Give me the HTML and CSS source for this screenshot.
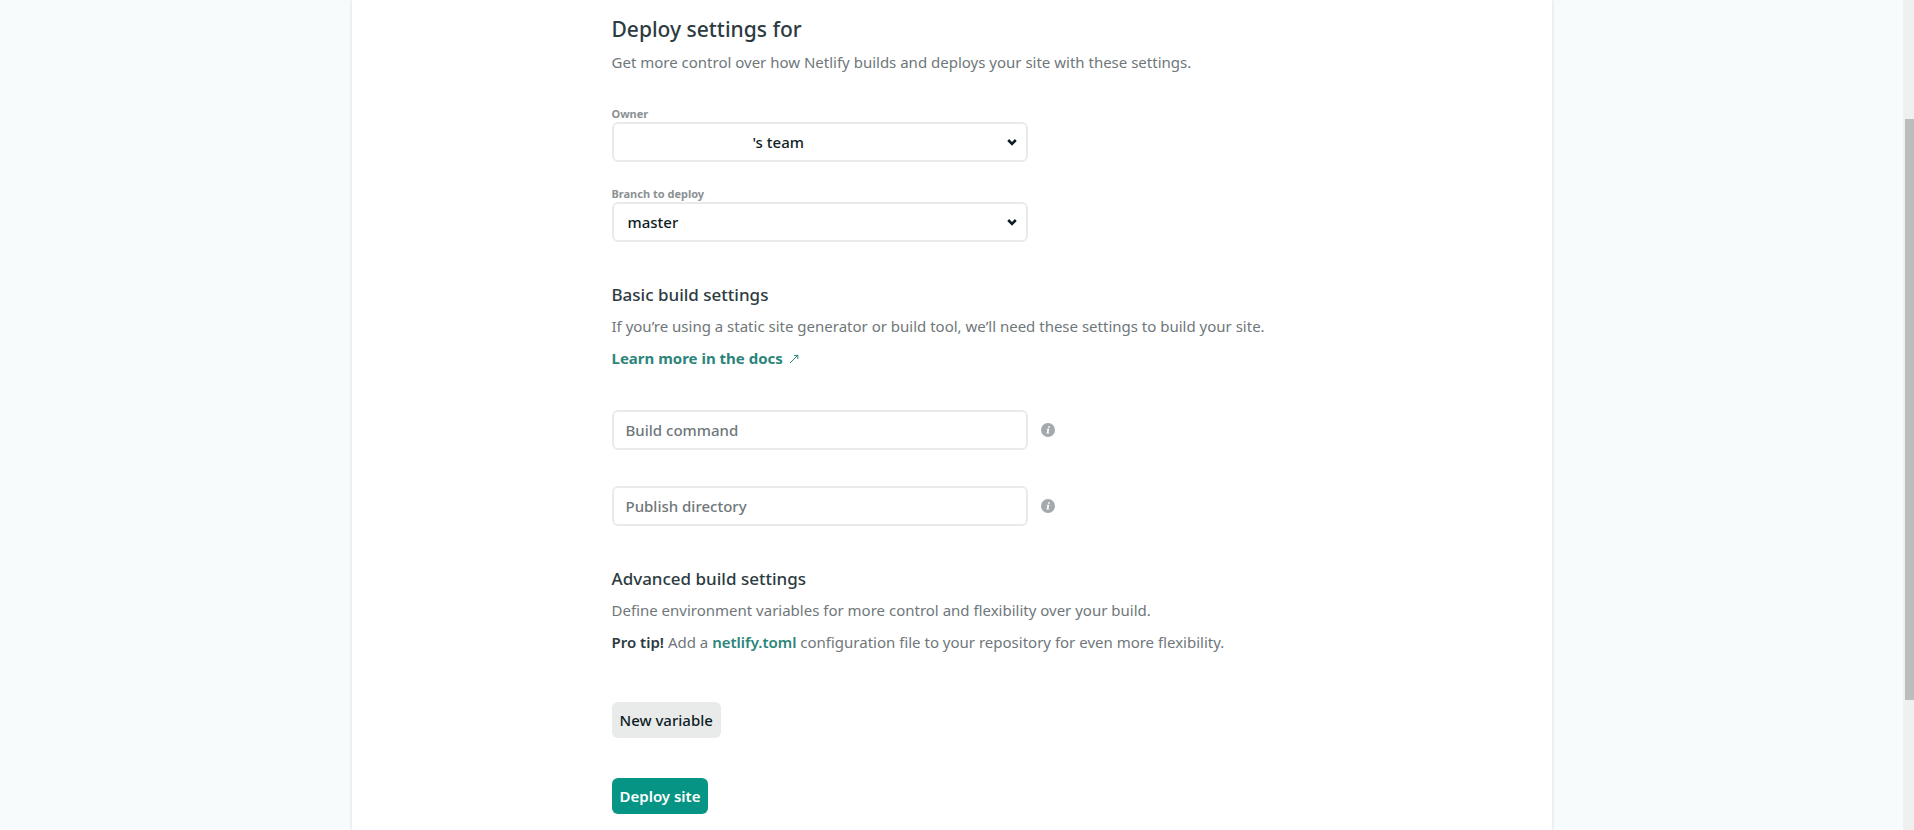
FILE: index.html
```html
<!DOCTYPE html>
<html lang="en">
<head>
    <meta charset="UTF-8">
    <meta name="viewport" content="width=device-width, initial-scale=1.0">
    <title>Deploy settings</title>
    <link rel="stylesheet" href="styles.css">
</head>
<body>
    <main class="card">
        <form class="settings">
            <section>
                <h1>Deploy settings for</h1>
                <p>Get more control over how Netlify builds and deploys your site with these settings.</p>

                <div class="field">
                    <label for="owner">Owner</label>
                    <select id="owner" class="control owner">
                        <option>'s team</option>
                    </select>
                </div>
                <div class="field">
                    <label for="branch">Branch to deploy</label>
                    <select id="branch" class="control">
                        <option>master</option>
                    </select>
                </div>
            </section>

            <section>
                <h2>Basic build settings</h2>
                <p>If you’re using a static site generator or build tool, we’ll need these settings to build your site.</p>
                <p>
                    <a href="#docs" class="docs">Learn more in the docs
                        <svg width="10" height="10" viewBox="0 0 10 10" fill="none" stroke="currentColor"><path d="M1 9L9 1M5 1.4H8.8V5"/></svg>
                    </a>
                </p>

                <div class="input-row">
                    <input type="text" class="control" placeholder="Build command" aria-label="Build command">
                    <button type="button" class="info" aria-label="About the build command">
                        <svg width="14" height="14" viewBox="0 0 14 14"><circle cx="7" cy="7" r="7" fill="#a3a9ac"/><path d="M7.3 3.2h1.6l-.4 1.6H6.9zM5.9 5.7h2.5l-1 3.9h.8l-.2 1H5.5l1-3.9h-.9z" fill="#fff"/></svg>
                    </button>
                </div>
                <div class="input-row">
                    <input type="text" class="control" placeholder="Publish directory" aria-label="Publish directory">
                    <button type="button" class="info" aria-label="About the publish directory">
                        <svg width="14" height="14" viewBox="0 0 14 14"><circle cx="7" cy="7" r="7" fill="#a3a9ac"/><path d="M7.3 3.2h1.6l-.4 1.6H6.9zM5.9 5.7h2.5l-1 3.9h.8l-.2 1H5.5l1-3.9h-.9z" fill="#fff"/></svg>
                    </button>
                </div>
            </section>

            <section>
                <h2>Advanced build settings</h2>
                <p>Define environment variables for more control and flexibility over your build.</p>
                <p><strong>Pro tip!</strong> Add a <a href="#toml">netlify.toml</a> configuration file to your repository for even more flexibility.</p>

                <div class="actions">
                    <button type="button" class="btn">New variable</button>
                    <button type="submit" class="btn btn-primary">Deploy site</button>
                </div>
            </section>
        </form>
    </main>

    <div class="scrollbar">
        <div class="thumb"></div>
    </div>
</body>
</html>
```
FILE: styles.css
```css
* {
    box-sizing: border-box;
}
body {
    margin: 0;
    padding-right: 11px;
    background-color: #f7fbfc;
    color: #2d3b41;
    font-family: "Segoe UI", "Noto Sans", sans-serif;
    font-size: 15px;
}
.card {
    max-width: 1200px;
    min-height: 100vh;
    margin: 0 auto;
    padding: 12px 24px 16px;
    background-color: #fff;
    box-shadow: 0 0 3px rgba(14, 30, 37, 0.16);
}
.settings {
    max-width: 680px;
    margin: 0 auto;
}
section + section {
    margin-top: 38px;
}
h1 {
    margin: 0;
    font-size: 21px;
    font-weight: 500;
    line-height: 34px;
}
h2 {
    margin: 0;
    font-size: 17px;
    font-weight: 500;
    line-height: 30px;
}
p {
    margin: 0;
    color: #6f777a;
    line-height: 32px;
}
strong {
    color: #2d3b41;
    font-weight: 600;
}
a {
    color: #2b857a;
    font-weight: 600;
    text-decoration: none;
}
.docs {
    font-weight: 700;
}
.docs svg {
    margin-left: 2px;
}

/* form fields */
.field {
    margin-top: 24px;
}
p + .field {
    margin-top: 28px;
}
.field label {
    display: block;
    color: #8b9194;
    font-size: 11px;
    font-weight: 700;
    line-height: 16px;
}
.control {
    display: block;
    width: 416px;
    max-width: 100%;
    height: 40px;
    padding: 0 12px;
    border: 2px solid #e9ebeb;
    border-radius: 6px;
    background-color: #fff;
    color: #0e1e25;
    font-family: inherit;
    font-size: 15px;
    font-weight: 500;
}
.control::placeholder {
    color: #6f777a;
    opacity: 1;
}
select.control {
    padding: 0 32px 0 14px;
    appearance: none;
    background-image: url("data:image/svg+xml,%3Csvg xmlns='http://www.w3.org/2000/svg' width='10' height='8' viewBox='0 0 10 8'%3E%3Cpath d='M1.2 2L5 5.8L8.8 2' fill='none' stroke='%230e1e25' stroke-width='2.6'/%3E%3C/svg%3E");
    background-repeat: no-repeat;
    background-position: right 9px center;
}
select.owner {
    padding-left: 139px;
}
.input-row {
    display: flex;
    align-items: center;
    gap: 13px;
    margin-top: 36px;
}
.info {
    display: flex;
    padding: 0;
    border: none;
    background: none;
    cursor: pointer;
}

/* buttons */
.actions {
    display: flex;
    flex-direction: column;
    align-items: flex-start;
    gap: 40px;
    margin-top: 44px;
}
.btn {
    height: 36px;
    padding: 0 8px;
    border: none;
    border-radius: 6px;
    background-color: #e9ebeb;
    color: #0e1e25;
    font-family: inherit;
    font-size: 15px;
    font-weight: 500;
    cursor: pointer;
}
.btn-primary {
    background-color: #069484;
    color: #fff;
    font-weight: 600;
}

/* page scrollbar */
.scrollbar {
    position: fixed;
    top: 0;
    right: 0;
    bottom: 0;
    width: 11px;
    padding-left: 2px;
    background-color: #f0f0f0;
}
.thumb {
    height: 70vh;
    margin-top: 119px;
    background-color: #bdbdbd;
}
```
